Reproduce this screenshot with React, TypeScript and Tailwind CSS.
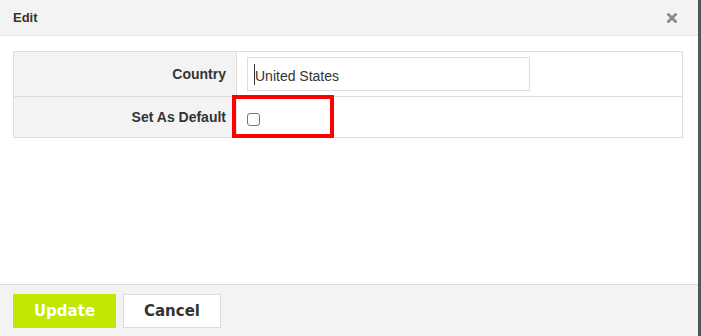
import { useState } from "react";

const labelCell =
  "w-[223px] border-r border-[#dddddd] bg-[#f3f3f3] pr-[10px] text-right text-[14px] font-bold text-[#333333]";

export default function App() {
  const [country, setCountry] = useState("United States");
  const [isDefault, setIsDefault] = useState(false);

  return (
    <div className="flex h-[336px] w-[701px] bg-[#555555] font-['Liberation_Sans',Arial,sans-serif]">
      <div className="flex w-[698px] flex-col bg-white">
        {/* header */}
        <div className="flex h-[36px] items-center justify-between border-b border-[#e3e3e3] bg-[#f3f3f3] pl-[13px] pr-[21px]">
          <span className="text-[13px] font-bold text-[#333333]">Edit</span>
          <button type="button" aria-label="Close" className="text-[#8a8a8a]">
            <svg width="10" height="10" viewBox="0 0 10 10" className="block">
              <path d="M1.5 1.5 L8.5 8.5 M8.5 1.5 L1.5 8.5" stroke="currentColor" strokeWidth="2.8" strokeLinecap="square" />
            </svg>
          </button>
        </div>

        {/* body */}
        <div className="flex-1 pl-[13px] pr-[15px] pt-[15px]">
          <table className="w-[670px] border-collapse border border-[#dddddd]">
            <tbody>
              <tr className="h-[45px] border-b border-[#dddddd]">
                <td className={labelCell}>Country</td>
                <td className="pl-[10px]">
                  <div className="relative w-[283px]">
                    <input
                      value={country}
                      onChange={(e) => setCountry(e.target.value)}
                      className="block h-[34px] w-[283px] border border-[#dddddd] bg-white px-[7px] pt-[3px] text-[14px] text-[#333333] outline-none"
                    />
                    <span className="absolute left-[7px] top-[7px] h-[21px] w-px bg-[#333333]" />
                  </div>
                </td>
              </tr>
              <tr className="h-[41px]">
                <td className={labelCell}>Set As Default</td>
                <td className="relative pl-[10px]">
                  <input
                    type="checkbox"
                    checked={isDefault}
                    onChange={(e) => setIsDefault(e.target.checked)}
                    className="mt-[4px] block h-[13px] w-[13px] appearance-none rounded-[3px] border border-[#767676] bg-white"
                  />
                  <span className="pointer-events-none absolute -top-[2px] left-[-5px] h-[43px] w-[102px] border-4 border-[#ff0000]" />
                </td>
              </tr>
            </tbody>
          </table>
        </div>

        {/* footer */}
        <div className="flex h-[52px] items-start gap-[7px] border-t border-[#dddddd] bg-[#f3f3f3] pl-[13px] pt-[9px] font-['DejaVu_Sans',Verdana,sans-serif]">
          <button type="button" className="h-[34px] w-[103px] bg-[#c0e800] text-[15px] font-bold text-white">
            Update
          </button>
          <button
            type="button"
            className="h-[34px] w-[98px] border border-[#dddddd] bg-white text-[15px] font-bold text-[#333333]"
          >
            Cancel
          </button>
        </div>
      </div>
    </div>
  );
}
